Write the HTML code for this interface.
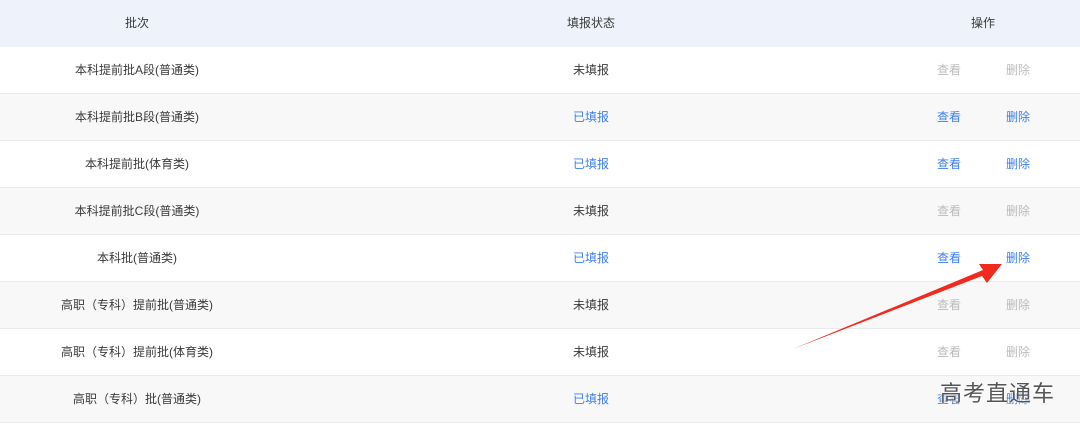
<!DOCTYPE html>
<html><head><meta charset="utf-8"><style>
body{margin:0;width:1080px;height:429px;background:#fff;font-family:"Liberation Sans","Noto Sans CJK SC",sans-serif;font-size:12px;color:#3a3a3a;position:relative;overflow:hidden}
.r{position:absolute;left:0;width:1080px;height:46px;border-bottom:1px solid #ebebeb}
.r span{position:absolute;top:0;line-height:46px;transform:translateX(-50%);white-space:nowrap}
.h{background:#eef2fa;border-bottom:none;height:47px}
.g{background:#f8f8f8}
.b{color:#3d7ff0}.d{color:#bbb}
</style></head><body>
<div class="r h" style="top:0"><span style="left:137px;line-height:47px">批次</span><span style="left:591px;line-height:47px">填报状态</span><span style="left:983px;line-height:47px">操作</span></div>
<div class="r" style="top:47px"><span style="left:137px">本科提前批A段(普通类)</span><span style="left:591px">未填报</span><span class="d" style="left:949px">查看</span><span class="d" style="left:1018px">删除</span></div>
<div class="r g" style="top:94px"><span style="left:137px">本科提前批B段(普通类)</span><span class="b" style="left:591px">已填报</span><span class="b" style="left:949px">查看</span><span class="b" style="left:1018px">删除</span></div>
<div class="r" style="top:141px"><span style="left:137px">本科提前批(体育类)</span><span class="b" style="left:591px">已填报</span><span class="b" style="left:949px">查看</span><span class="b" style="left:1018px">删除</span></div>
<div class="r g" style="top:188px"><span style="left:137px">本科提前批C段(普通类)</span><span style="left:591px">未填报</span><span class="d" style="left:949px">查看</span><span class="d" style="left:1018px">删除</span></div>
<div class="r" style="top:235px"><span style="left:137px">本科批(普通类)</span><span class="b" style="left:591px">已填报</span><span class="b" style="left:949px">查看</span><span class="b" style="left:1018px">删除</span></div>
<div class="r g" style="top:282px"><span style="left:137px">高职（专科）提前批(普通类)</span><span style="left:591px">未填报</span><span class="d" style="left:949px">查看</span><span class="d" style="left:1018px">删除</span></div>
<div class="r" style="top:329px"><span style="left:137px">高职（专科）提前批(体育类)</span><span style="left:591px">未填报</span><span class="d" style="left:949px">查看</span><span class="d" style="left:1018px">删除</span></div>
<div class="r g" style="top:376px"><span style="left:137px">高职（专科）批(普通类)</span><span class="b" style="left:591px">已填报</span><span class="b" style="left:949px">查看</span><span class="b" style="left:1018px">删除</span></div>
<svg style="position:absolute;left:0;top:0" width="1080" height="429">
<polygon points="793,349 982,276 987,283 1002,264 979,264 983,270" fill="#f02a1e"/>
</svg>
<div style="position:absolute;left:940px;top:376px;font-size:22px;color:#555;letter-spacing:1px;text-shadow:0 0 2px #fff,0 0 2px #fff">高考直通车</div>
</body></html>
